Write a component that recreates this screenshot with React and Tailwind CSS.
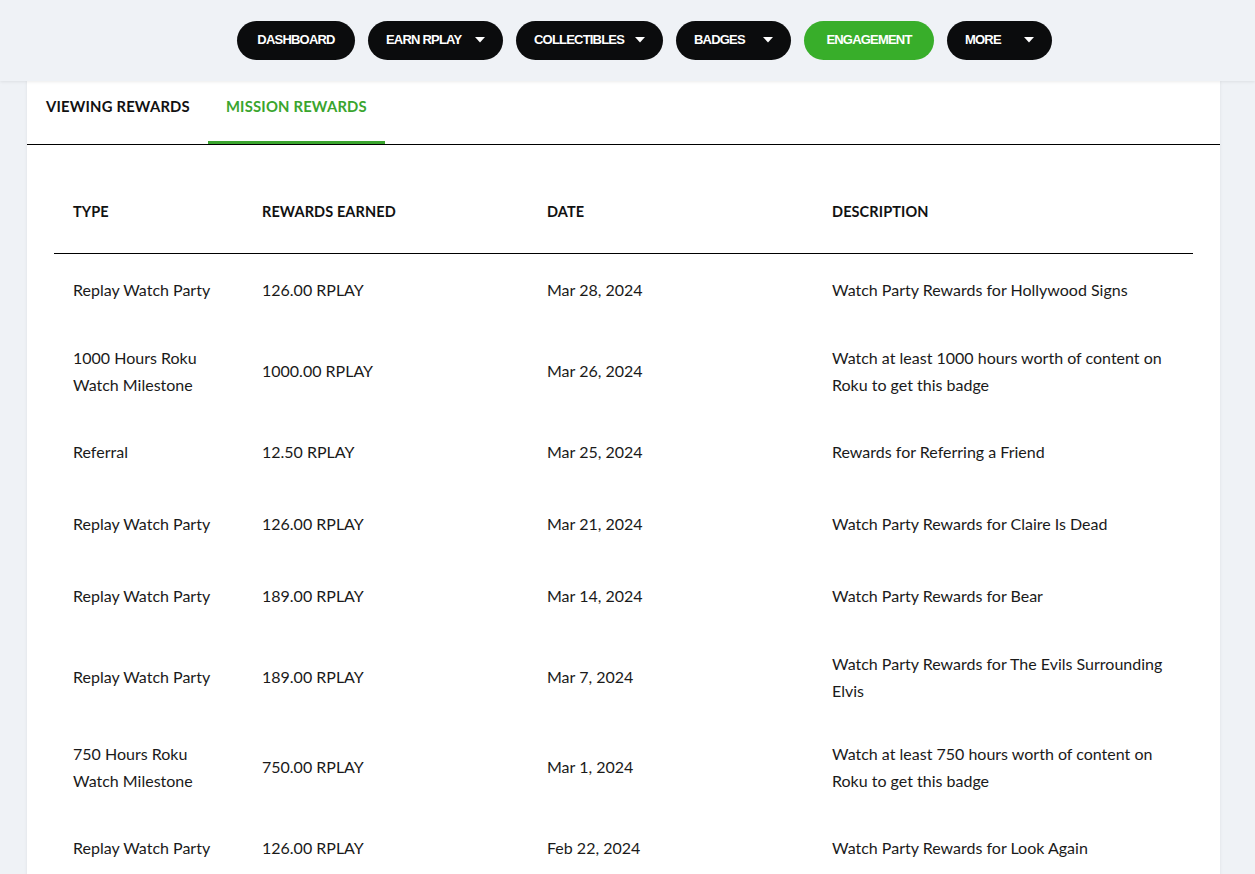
import React from 'react';

const nav = [
  { label: 'DASHBOARD', caret: false, w: 'w-[118px]' },
  { label: 'EARN RPLAY', caret: true, w: 'w-[135px]' },
  { label: 'COLLECTIBLES', caret: true, w: 'w-[147px]' },
  { label: 'BADGES', caret: true, w: 'w-[115px]' },
  { label: 'ENGAGEMENT', caret: false, active: true, w: 'w-[130px]' },
  { label: 'MORE', caret: true, w: 'w-[105px]' },
];

const rows = [
  { type: ['Replay Watch Party'], amount: '126.00 RPLAY', date: 'Mar 28, 2024', desc: ['Watch Party Rewards for Hollywood Signs'] },
  { type: ['1000 Hours Roku', 'Watch Milestone'], amount: '1000.00 RPLAY', date: 'Mar 26, 2024', desc: ['Watch at least 1000 hours worth of content on', 'Roku to get this badge'] },
  { type: ['Referral'], amount: '12.50 RPLAY', date: 'Mar 25, 2024', desc: ['Rewards for Referring a Friend'] },
  { type: ['Replay Watch Party'], amount: '126.00 RPLAY', date: 'Mar 21, 2024', desc: ['Watch Party Rewards for Claire Is Dead'] },
  { type: ['Replay Watch Party'], amount: '189.00 RPLAY', date: 'Mar 14, 2024', desc: ['Watch Party Rewards for Bear'] },
  { type: ['Replay Watch Party'], amount: '189.00 RPLAY', date: 'Mar 7, 2024', desc: ['Watch Party Rewards for The Evils Surrounding', 'Elvis'] },
  { type: ['750 Hours Roku', 'Watch Milestone'], amount: '750.00 RPLAY', date: 'Mar 1, 2024', desc: ['Watch at least 750 hours worth of content on', 'Roku to get this badge'] },
  { type: ['Replay Watch Party'], amount: '126.00 RPLAY', date: 'Feb 22, 2024', desc: ['Watch Party Rewards for Look Again'] },
];

function Caret() {
  return (
    <svg width="10" height="6" viewBox="0 0 10 6" className="shrink-0">
      <path d="M0 0h10L5 5.5z" fill="#fff" />
    </svg>
  );
}

function Lines({ lines }) {
  return lines.map((l, i) => (
    <React.Fragment key={i}>
      {i > 0 && <br />}
      {l}
    </React.Fragment>
  ));
}

export default function App() {
  return (
    <div className="min-h-[874px] bg-[#eff2f6] font-['Lato',sans-serif] text-[#111]">
      {/* top nav */}
      <div className="h-[81px] flex items-center justify-center gap-[13px] pl-[34px] pb-[1px] shadow-[0_1px_3px_rgba(0,0,0,0.08)] relative z-10 bg-[#eff2f6]">
        {nav.map((n) => (
          <button
            key={n.label}
            className={`${n.w} h-[39px] rounded-full flex items-center px-[18px] font-['Liberation_Sans',sans-serif] font-bold text-[13px] tracking-[-0.8px] text-white whitespace-nowrap ${
              n.active ? 'bg-[#38ae2a]' : 'bg-[#0b0c0d]'
            } ${n.caret ? 'justify-between' : 'justify-center'}`}
          >
            <span>{n.label}</span>
            {n.caret && <Caret />}
          </button>
        ))}
      </div>

      {/* card */}
      <div className="mx-[27px] w-[1193px] bg-white shadow-[0_0_3px_rgba(0,0,0,0.08)]">
        <div className="flex h-[64px] border-b border-black">
          <div className="flex items-center text-[14.8px] font-bold tracking-[0.2px] -mt-[13px] pl-[19px] pr-[18px]">
            VIEWING REWARDS
          </div>
          <div className="relative px-[18px] flex items-center text-[14.8px] font-bold tracking-[0.2px] text-[#3aa52e] -mt-[13px]">
            MISSION REWARDS
            <div className="absolute left-0 right-0 bottom-0 h-[3px] bg-[#3aa52e]" />
          </div>
        </div>

        <div className="px-[27px] pt-[53px]">
          <table className="w-[1139px] table-fixed border-collapse">
            <colgroup>
              <col className="w-[189px]" />
              <col className="w-[285px]" />
              <col className="w-[285px]" />
              <col className="w-[380px]" />
            </colgroup>
            <thead>
              <tr className="border-b border-black">
                {['TYPE', 'REWARDS EARNED', 'DATE', 'DESCRIPTION'].map((h) => (
                  <th key={h} className="text-left px-[19px] pb-[28px] pt-0 text-[14.5px] font-bold leading-[27px] tracking-[0.1px]">
                    {h}
                  </th>
                ))}
              </tr>
            </thead>
            <tbody className="text-[16px] leading-[27px] text-[#1a1a1a]">
              {rows.map((r, i) => (
                <tr key={i}>
                  <td className="px-[19px] py-[18px] h-[72px] align-middle"><Lines lines={r.type} /></td>
                  <td className="px-[19px] py-[18px] align-middle">{r.amount}</td>
                  <td className="px-[19px] py-[18px] align-middle">{r.date}</td>
                  <td className="px-[19px] py-[18px] align-middle"><Lines lines={r.desc} /></td>
                </tr>
              ))}
            </tbody>
          </table>
        </div>
      </div>
    </div>
  );
}
